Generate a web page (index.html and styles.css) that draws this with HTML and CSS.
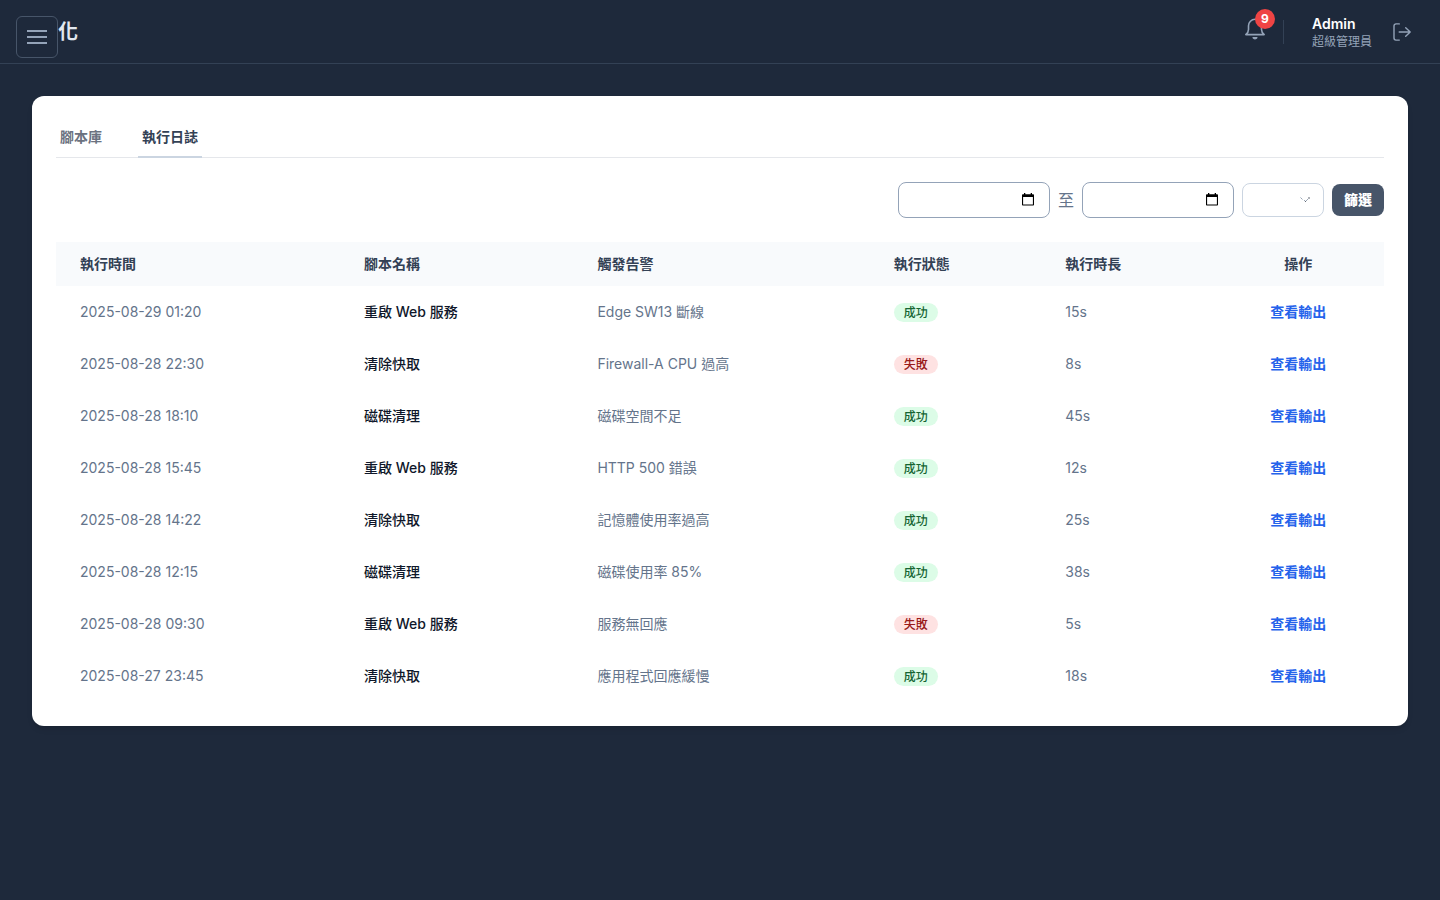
FILE: index.html
```html
<!DOCTYPE html>
<html lang="zh-Hant">
<head>
<meta charset="utf-8">
<title>自動化</title>
<link rel="stylesheet" href="styles.css">
</head>
<body>
<button class="menu-btn" aria-label="選單"><svg width="24" height="24" viewBox="0 0 24 24" fill="none" stroke="currentColor" stroke-width="1.8"><path d="M2 6h20M2 12h20M2 18h20"/></svg></button>
<header class="topbar">
  <h1 class="title">自動化</h1>
  <div class="actions">
    <div class="bell">
      <svg width="24" height="24" viewBox="0 0 24 24" fill="none" stroke="currentColor" stroke-width="1.6" stroke-linecap="round" stroke-linejoin="round"><path d="M2.800 17.600h18.400c-1.500-1.300-2.700-3-2.700-5.200V8.800a6.500 6.500 0 0 0-13 0v3.600c0 2.200-1.200 3.900-2.700 5.200z"/><path d="M10 20.700a2.300 2.300 0 0 0 4 0z" fill="currentColor" stroke-width="1.200"/></svg>
      <span class="count">9</span>
    </div>
    <div class="divider"></div>
    <div class="user"><span class="name">Admin</span><span class="role">超級管理員</span></div>
    <svg class="logout" width="20" height="20" viewBox="0 0 20 20" fill="none" stroke="currentColor" stroke-width="1.4" stroke-linecap="round" stroke-linejoin="round"><path d="M7.300 1.900H4A2 2 0 0 0 2 3.900v12.200A2 2 0 0 0 4 18.100H7.300M7.200 10h11M13.700 5.700L18.200 10l-4.500 4.300"/></svg>
  </div>
</header>
<main class="card">
  <nav class="tabs"><a class="tab">腳本庫</a><a class="tab active">執行日誌</a></nav>
  <div class="filters">
    <div class="field date"><svg class="cal" width="12" height="13" viewBox="0 0 12 13"><path fill="#000" fill-rule="evenodd" d="M2 0h1.300v1.200h5.400V0H10v1.200h1.200a.8.8 0 0 1 .8.8v9.700a.8.8 0 0 1-.8.800H.8a.8.800 0 0 1-.8-.8V2a.8.800 0 0 1 .8-.8H2zM1.100 4v7.400h9.800V4z"/></svg></div>
    <span class="to">至</span>
    <div class="field date"><svg class="cal" width="12" height="13" viewBox="0 0 12 13"><path fill="#000" fill-rule="evenodd" d="M2 0h1.300v1.200h5.400V0H10v1.200h1.200a.8.8 0 0 1 .8.8v9.700a.8.8 0 0 1-.8.800H.8a.8.800 0 0 1-.8-.8V2a.8.800 0 0 1 .8-.8H2zM1.100 4v7.400h9.800V4z"/></svg></div>
    <div class="field select"><svg width="12" height="8" viewBox="0 0 12 8"><path fill="#64748b" fill-opacity=".65" d="M2 2h1v1H2zM5 4h1v1H5zM7 4h1v1H7zM8 3h1v1H8z"/><path fill="#1e293b" fill-opacity=".7" d="M6 5h1v1H6zM9 1.500h2v.9H9z"/><path fill="#94a3b8" fill-opacity=".5" d="M1 1h1v1H1zM3 3h1v1H3z"/></svg></div>
    <button class="submit">篩選</button>
  </div>
  <table class="log">
    <colgroup><col class="c1"><col class="c2"><col class="c3"><col class="c4"><col class="c5"><col class="c6"></colgroup>
    <thead><tr><th>執行時間</th><th>腳本名稱</th><th>觸發告警</th><th>執行狀態</th><th>執行時長</th><th class="op">操作</th></tr></thead>
    <tbody>
      <tr><td>2025-08-29 01:20</td><td class="script">重啟 Web 服務</td><td>Edge SW13 斷線</td><td><span class="badge ok">成功</span></td><td>15s</td><td class="op"><a class="link">查看輸出</a></td></tr>
      <tr><td>2025-08-28 22:30</td><td class="script">清除快取</td><td>Firewall-A CPU 過高</td><td><span class="badge fail">失敗</span></td><td>8s</td><td class="op"><a class="link">查看輸出</a></td></tr>
      <tr><td>2025-08-28 18:10</td><td class="script">磁碟清理</td><td>磁碟空間不足</td><td><span class="badge ok">成功</span></td><td>45s</td><td class="op"><a class="link">查看輸出</a></td></tr>
      <tr><td>2025-08-28 15:45</td><td class="script">重啟 Web 服務</td><td>HTTP 500 錯誤</td><td><span class="badge ok">成功</span></td><td>12s</td><td class="op"><a class="link">查看輸出</a></td></tr>
      <tr><td>2025-08-28 14:22</td><td class="script">清除快取</td><td>記憶體使用率過高</td><td><span class="badge ok">成功</span></td><td>25s</td><td class="op"><a class="link">查看輸出</a></td></tr>
      <tr><td>2025-08-28 12:15</td><td class="script">磁碟清理</td><td>磁碟使用率 85%</td><td><span class="badge ok">成功</span></td><td>38s</td><td class="op"><a class="link">查看輸出</a></td></tr>
      <tr><td>2025-08-28 09:30</td><td class="script">重啟 Web 服務</td><td>服務無回應</td><td><span class="badge fail">失敗</span></td><td>5s</td><td class="op"><a class="link">查看輸出</a></td></tr>
      <tr><td>2025-08-27 23:45</td><td class="script">清除快取</td><td>應用程式回應緩慢</td><td><span class="badge ok">成功</span></td><td>18s</td><td class="op"><a class="link">查看輸出</a></td></tr>
    </tbody>
  </table>
</main>
</body>
</html>
```
FILE: styles.css
```css
* { box-sizing: border-box; }
body { margin: 0; height: 900px; overflow: hidden; background: #1e293b; font-family: Inter, "Noto Sans CJK TC", sans-serif; font-size: 14px; line-height: 20px; color: #64748b; }
button { font: inherit; }
.menu-btn { position: absolute; left: 16px; top: 16px; width: 42px; height: 42px; padding: 0; display: flex; align-items: center; justify-content: center; background: #1e293b; border: 1px solid #475569; border-radius: 6px; color: #94a3b8; }
.topbar { height: 64px; padding: 0 28px 0 18px; display: flex; align-items: center; justify-content: space-between; border-bottom: 1px solid #334155; }
.title { margin: 0; font-size: 20px; line-height: 28px; font-weight: 700; color: #e2e8f0; }
.actions { display: flex; align-items: center; color: #94a3b8; }
.bell { position: relative; width: 24px; height: 24px; margin: -5px 16px 0 0; }
.bell svg { display: block; }
.count { position: absolute; left: 12px; top: -8px; width: 20px; height: 20px; border-radius: 50%; background: #ef4444; color: #fff; font-size: 12px; font-weight: 700; text-align: center; line-height: 20px; }
.divider { width: 1px; height: 24px; background: #334155; margin-right: 28px; }
.user { display: flex; flex-direction: column; margin-right: 20px; }
.name { color: #fff; font-weight: 600; line-height: 20px; }
.role { font-size: 12px; line-height: 16px; }
.logout { display: block; }
.card { margin: 32px 32px 0; height: 630px; padding: 24px; background: #fff; border-radius: 12px; box-shadow: 0 4px 6px -1px rgba(0,0,0,.1), 0 2px 4px -2px rgba(0,0,0,.1); }
.tabs { display: flex; gap: 32px; height: 38px; border-bottom: 1px solid #e5e7eb; font-weight: 600; color: #6b7280; }
.tab { height: 38px; padding: 7px 4px 9px; border-bottom: 2px solid transparent; }
.tab.active { color: #334155; border-color: #cbd5e1; }
.filters { display: flex; align-items: center; justify-content: flex-end; gap: 8px; height: 36px; margin: 24px 0; }
.field { display: flex; align-items: center; justify-content: flex-end; border-radius: 8px; background: #fff; }
.date { width: 152px; height: 36px; border: 1px solid #94a3b8; padding: 0 15px 1px 0; }
.to { font-size: 16px; line-height: 24px; }
.select { width: 82px; height: 34px; border: 1px solid #cbd5e1; padding-right: 12px; }
.submit { width: 52px; height: 32px; padding: 0; border: 0; border-radius: 8px; background: #475569; color: #fff; font-weight: 900; }
.log { width: 100%; table-layout: fixed; border-collapse: collapse; }
.c1 { width: 284px; } .c2 { width: 233.400px; } .c3 { width: 296.400px; } .c4 { width: 171.500px; } .c5 { width: 171px; }
.log th { height: 44px; padding: 0 24px 1px; text-align: left; background: #f8fafc; color: #334155; font-weight: 700; }
.log td { height: 52px; padding: 0 24px; }
.log .op { text-align: center; }
.log .script { color: #0f172a; font-weight: 500; }
.badge { display: inline-block; padding: 2px 10px; border-radius: 10px; font-size: 12px; line-height: 15px; font-weight: 500; vertical-align: middle; }
.ok { background: #dcfce7; color: #166534; }
.fail { background: #fee2e2; color: #991b1b; }
.link { color: #2563eb; font-weight: 600; }
```
